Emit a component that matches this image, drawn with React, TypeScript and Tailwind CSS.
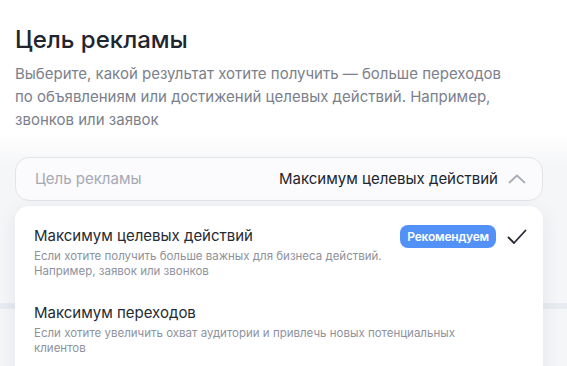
import React from "react"

const font = { fontFamily: "Inter, 'Noto Sans', sans-serif" }

function ChevronUp() {
  return (
    <svg width="18" height="10" viewBox="0 0 18 10" fill="none" stroke="#a9adb7" strokeWidth="1.8" strokeLinecap="round" strokeLinejoin="round">
      <polyline points="1.5 8.5 9 1.5 16.5 8.5" />
    </svg>
  )
}

function Check() {
  return (
    <svg width="20" height="16" viewBox="0 0 20 16" fill="none" stroke="#262a33" strokeWidth="1.8" strokeLinecap="round" strokeLinejoin="round">
      <polyline points="1.5 8.5 7 14 18.5 1.5" />
    </svg>
  )
}

type Option = {
  title: string
  text: string[]
  recommended?: boolean
  selected?: boolean
}

const options: Option[] = [
  {
    title: "Максимум целевых действий",
    text: ["Если хотите получить больше важных для бизнеса действий.", "Например, заявок или звонков"],
    recommended: true,
    selected: true,
  },
  {
    title: "Максимум переходов",
    text: ["Если хотите увеличить охват аудитории и привлечь новых потенциальных", "клиентов"],
  },
]

export default function App() {
  return (
    <div className="relative h-[366px] w-[567px] overflow-hidden bg-white" style={font}>
      <div className="px-[15px] pt-[25px]">
        <h1 className="text-[24px] font-medium leading-[30px] text-[#21252d]">Цель рекламы</h1>
        <p className="mt-[7px] w-[500px] text-[15px] leading-[23px] text-[#7b808c]">
          Выберите, какой результат хотите получить — больше переходов по объявлениям или достижений целевых действий. Например, звонков или заявок
        </p>
      </div>

      {/* Field area with soft backdrop */}
      <div className="mt-[4px] h-[240px] bg-gradient-to-b from-white to-[#f5f6f8] to-[30px] pt-[22px]">
        <div className="ml-[15px] flex h-[44px] w-[528px] items-center rounded-[14px] border border-[#e2e4ea] bg-[#fbfbfd] pl-[19px] pr-[16px]">
          <span className="text-[15px] text-[#a5a9b4]">Цель рекламы</span>
          <span className="ml-auto text-[15px] text-[#21252d]">Максимум целевых действий</span>
          <span className="ml-[10px] flex items-center">
            <ChevronUp />
          </span>
        </div>
        <div className="mt-[102px] h-[6px] bg-[#e8ebf1]" />
      </div>

      {/* Dropdown */}
      <div className="absolute left-[15px] top-[206px] w-[528px] rounded-[14px] bg-white pb-4 pl-[19px] pr-[16px] pt-[18px] shadow-[0_4px_20px_rgba(30,40,60,0.08)]">
        {options.map((o) => (
          <div key={o.title} className="mb-[22px]">
            <div className="flex h-[24px] items-center">
              <div className="flex-1 text-[15px] leading-[24px] text-[#262a33]">{o.title}</div>
              {o.recommended && (
                <span className="rounded-[8px] bg-[#5291f8] px-[7px] py-[3px] text-[12px] font-semibold leading-[17px] tracking-[-0.2px] text-white">
                  Рекомендуем
                </span>
              )}
              {o.selected && (
                <span className="ml-[11px] mt-[1px] flex">
                  <Check />
                </span>
              )}
            </div>
            <div className="mt-[1px] whitespace-nowrap text-[11.5px] leading-[15px] text-[#8e929d]">
              {o.text.map((t) => (
                <div key={t}>{t}</div>
              ))}
            </div>
          </div>
        ))}
      </div>
    </div>
  )
}
